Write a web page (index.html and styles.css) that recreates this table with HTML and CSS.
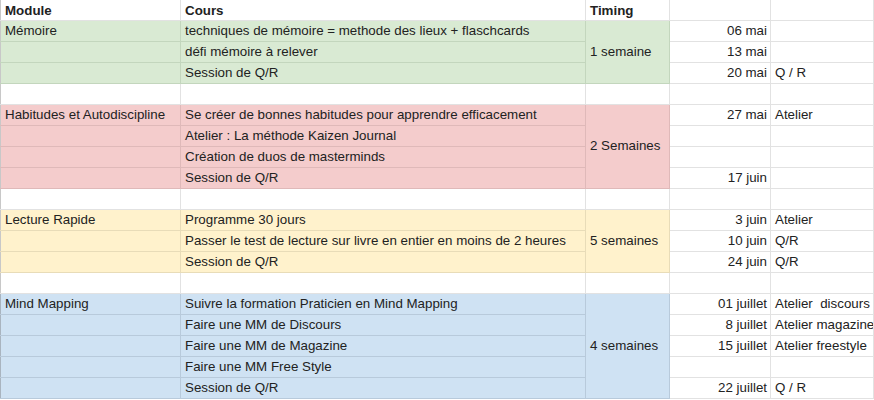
FILE: index.html
```html
<!DOCTYPE html>
<html lang="fr">
<head>
    <meta charset="UTF-8">
    <title>Programme</title>
    <link rel="stylesheet" href="styles.css">
</head>
<body>
    <!-- Planning sheet -->
    <table class="sheet">
        <colgroup>
            <col class="col-module">
            <col class="col-cours">
            <col class="col-timing">
            <col class="col-date">
            <col class="col-note">
        </colgroup>
        <tr class="head">
            <td>Module</td>
            <td>Cours</td>
            <td>Timing</td>
            <td></td>
            <td></td>
        </tr>

        <!-- Mémoire -->
        <tr class="green">
            <td>Mémoire</td>
            <td>techniques de mémoire = methode des lieux + flaschcards</td>
            <td rowspan="3" class="timing">1 semaine</td>
            <td class="date">06 mai</td>
            <td class="note"></td>
        </tr>
        <tr class="green">
            <td></td>
            <td>défi mémoire à relever</td>
            <td class="date">13 mai</td>
            <td class="note"></td>
        </tr>
        <tr class="green">
            <td></td>
            <td>Session de Q/R</td>
            <td class="date">20 mai</td>
            <td class="note">Q / R</td>
        </tr>
        <tr class="blank"><td></td><td></td><td></td><td></td><td></td></tr>

        <!-- Habitudes -->
        <tr class="red">
            <td>Habitudes et Autodiscipline</td>
            <td>Se créer de bonnes habitudes pour apprendre efficacement</td>
            <td rowspan="4" class="timing">2 Semaines</td>
            <td class="date">27 mai</td>
            <td class="note">Atelier</td>
        </tr>
        <tr class="red">
            <td></td>
            <td>Atelier : La méthode Kaizen Journal</td>
            <td class="date"></td>
            <td class="note"></td>
        </tr>
        <tr class="red">
            <td></td>
            <td>Création de duos de masterminds</td>
            <td class="date"></td>
            <td class="note"></td>
        </tr>
        <tr class="red">
            <td></td>
            <td>Session de Q/R</td>
            <td class="date">17 juin</td>
            <td class="note"></td>
        </tr>
        <tr class="blank"><td></td><td></td><td></td><td></td><td></td></tr>

        <!-- Lecture -->
        <tr class="yellow">
            <td>Lecture Rapide</td>
            <td>Programme 30 jours</td>
            <td rowspan="3" class="timing">5 semaines</td>
            <td class="date">3 juin</td>
            <td class="note">Atelier</td>
        </tr>
        <tr class="yellow">
            <td></td>
            <td>Passer le test de lecture sur livre en entier en moins de 2 heures</td>
            <td class="date">10 juin</td>
            <td class="note">Q/R</td>
        </tr>
        <tr class="yellow">
            <td></td>
            <td>Session de Q/R</td>
            <td class="date">24 juin</td>
            <td class="note">Q/R</td>
        </tr>
        <tr class="blank"><td></td><td></td><td></td><td></td><td></td></tr>

        <!-- Mind Mapping -->
        <tr class="blue first">
            <td>Mind Mapping</td>
            <td>Suivre la formation Praticien en Mind Mapping</td>
            <td rowspan="5" class="timing">4 semaines</td>
            <td class="date">01 juillet</td>
            <td class="note">Atelier&nbsp; discours</td>
        </tr>
        <tr class="blue">
            <td></td>
            <td>Faire une MM de Discours</td>
            <td class="date">8 juillet</td>
            <td class="note">Atelier magazine</td>
        </tr>
        <tr class="blue">
            <td></td>
            <td>Faire une MM de Magazine</td>
            <td class="date">15 juillet</td>
            <td class="note">Atelier freestyle</td>
        </tr>
        <tr class="blue">
            <td></td>
            <td>Faire une MM Free Style</td>
            <td class="date"></td>
            <td class="note"></td>
        </tr>
        <tr class="blue">
            <td></td>
            <td>Session de Q/R</td>
            <td class="date">22 juillet</td>
            <td class="note">Q / R</td>
        </tr>
    </table>
</body>
</html>
```

FILE: styles.css
```css
/* General */
body {
    margin: 0;
    background: #fff;
    font-family: "Liberation Sans", Arial, sans-serif;
    font-size: 13.33px;
    color: #222;
}

/* Sheet grid */
.sheet {
    border-collapse: collapse;
    table-layout: fixed;
    width: 873px;
}

.col-module { width: 180px; }
.col-cours  { width: 405px; }
.col-timing { width: 84px; }
.col-date   { width: 101px; }
.col-note   { width: 103px; }

.sheet td {
    height: 20px;
    padding: 0 3px 0 4px;
    border: 1px solid #e2e2e2;
    line-height: 20px;
    white-space: nowrap;
    overflow: hidden;
    vertical-align: bottom;
    box-sizing: content-box;
}

.sheet tr.head td {
    border-top: none;
    height: 19.5px;
    font-weight: bold;
    line-height: 19px;
}

.sheet td:first-child {
    border-left: 1px solid #c8c8c8;
}

.sheet td.timing {
    vertical-align: middle;
}

.sheet td.date {
    text-align: right;
    background: #fff;
    border-color: #e2e2e2;
}

.sheet td.note {
    background: #fff;
    border-color: #e2e2e2;
}

/* Module colours */
.green td {
    background: #d9ead3;
    border-color: #c3d6bd;
}

.red td {
    background: #f4cccc;
    border-color: #dfb9b9;
}

.yellow td {
    background: #fff2cc;
    border-color: #e8dcb8;
}

.blue td {
    background: #cfe2f3;
    border-color: #b8cadb;
}

.blue.first td {
    border-top-color: #b4b4b4;
}

.sheet tr.blue td:first-child {
    border-left-color: #a9b4bf;
}
```
